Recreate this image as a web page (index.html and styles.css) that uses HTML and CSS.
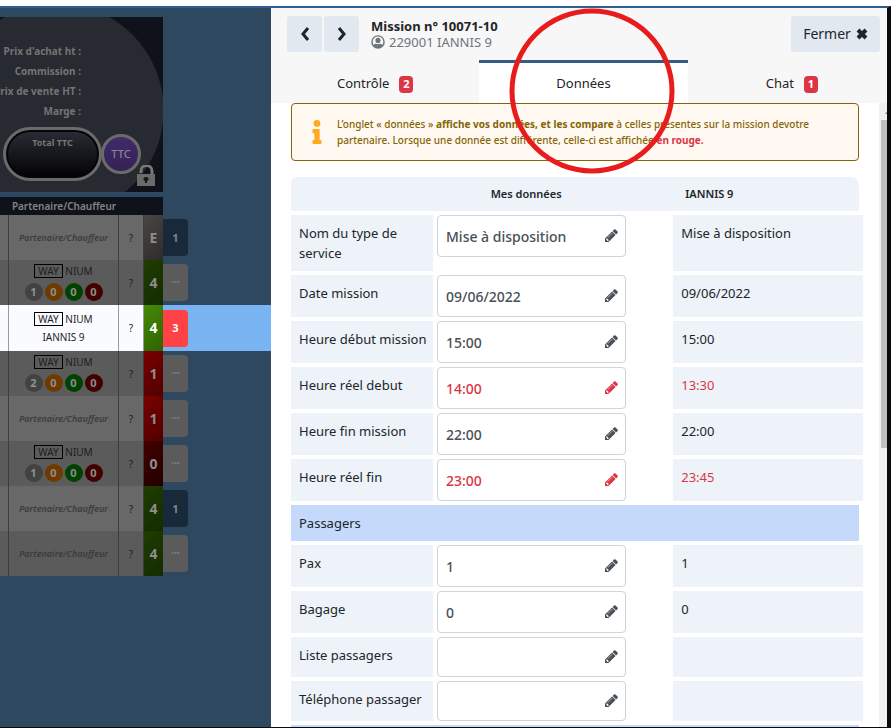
FILE: index.html
```html
<!DOCTYPE html>
<html lang="fr">
<head>
    <meta charset="UTF-8">
    <meta name="viewport" content="width=device-width, initial-scale=1.0">
    <title>Mission n° 10071-10</title>
    <link rel="stylesheet" href="styles.css">
</head>
<body>
    <!-- icônes -->
    <svg class="sprite">
        <symbol id="pencil" viewBox="128 128 1536 1536"><path d="M491 1536l91-91-235-235-91 91v107h128v128h107zm523-928q0-22-22-22-10 0-17 7l-542 542q-7 7-7 17 0 22 22 22 10 0 17-7l542-542q7-7 7-17zm-54-192l416 416-832 832h-416v-416zm683 96q0 53-37 90l-166 166-416-416 166-165q36-38 90-38 53 0 91 38l235 234q37 39 37 91z"/></symbol>
        <symbol id="user" viewBox="0 0 512 512"><path fill-rule="evenodd" d="M256 8a248 248 0 1 0 0 496 248 248 0 0 0 0-496zm0 50a198 198 0 0 1 160 314c-22-33-60-48-90-48-12 0-30 12-70 12s-58-12-70-12c-30 0-68 15-90 48A198 198 0 0 1 256 58zm0 46a94 94 0 1 0 0 188 94 94 0 0 0 0-188z"/></symbol>
        <symbol id="info" viewBox="0 0 192 512"><path d="M20 424h20V280H20c-11 0-20-9-20-20v-48c0-11 9-20 20-20h112c11 0 20 9 20 20v212h20c11 0 20 9 20 20v48c0 11-9 20-20 20H20c-11 0-20-9-20-20v-48c0-11 9-20 20-20zM96 0a72 72 0 1 0 0 144A72 72 0 0 0 96 0z"/></symbol>
    </svg>

    <div class="app">
        <aside class="planning">
            <div class="totals">
                <ul class="totals-list">
                    <li>Prix d'achat ht :</li>
                    <li>Commission :</li>
                    <li>Prix de vente HT :</li>
                    <li>Marge :</li>
                </ul>
                <div class="totals-foot">
                    <div class="total">Total TTC</div>
                    <button class="ttc" type="button">TTC</button>
                </div>
                <svg class="lock" viewBox="0 0 18 21"><path d="M4 8V6a5 5 0 0 1 11 0v4" fill="none" stroke="#787878" stroke-width="3"/><path d="M0 9h18v12H0z" fill="#6b6b6b"/><path d="M9 12a2 2 0 0 0-1 4v2h2v-2a2 2 0 0 0-1-4z" fill="#15171d"/></svg>
            </div>

            <table class="missions">
                <colgroup><col class="c-edge"><col class="c-partner"><col class="c-state"><col class="c-note"><col></colgroup>
                <thead>
                    <tr><th></th><th>Partenaire/Chauffeur</th><th></th><th></th><td></td></tr>
                </thead>
                <tbody>
                    <tr>
                        <td></td><td><em>Partenaire/Chauffeur</em></td><td>?</td><td class="note grey">E</td>
                        <td class="side"><button class="chip blue" type="button">1</button></td>
                    </tr>
                    <tr class="alt">
                        <td></td>
                        <td><span class="way">WAY</span> NIUM<div class="dots"><b class="d1">1</b><b class="d2">0</b><b class="d3">0</b><b class="d4">0</b></div></td>
                        <td>?</td><td class="note green">4</td>
                        <td class="side"><button class="chip more" type="button">•••</button></td>
                    </tr>
                    <tr class="active">
                        <td></td>
                        <td><span class="way">WAY</span> NIUM<div class="driver">IANNIS 9</div></td>
                        <td>?</td><td class="note green">4</td>
                        <td class="side"><button class="chip red" type="button">3</button></td>
                    </tr>
                    <tr class="alt">
                        <td></td>
                        <td><span class="way">WAY</span> NIUM<div class="dots"><b class="d1">2</b><b class="d2">0</b><b class="d3">0</b><b class="d4">0</b></div></td>
                        <td>?</td><td class="note red">1</td>
                        <td class="side"><button class="chip more" type="button">•••</button></td>
                    </tr>
                    <tr>
                        <td></td><td><em>Partenaire/Chauffeur</em></td><td>?</td><td class="note red">1</td>
                        <td class="side"><button class="chip more" type="button">•••</button></td>
                    </tr>
                    <tr class="alt">
                        <td></td>
                        <td><span class="way">WAY</span> NIUM<div class="dots"><b class="d1">1</b><b class="d2">0</b><b class="d3">0</b><b class="d4">0</b></div></td>
                        <td>?</td><td class="note dark">0</td>
                        <td class="side"><button class="chip more" type="button">•••</button></td>
                    </tr>
                    <tr>
                        <td></td><td><em>Partenaire/Chauffeur</em></td><td>?</td><td class="note green">4</td>
                        <td class="side"><button class="chip blue" type="button">1</button></td>
                    </tr>
                    <tr class="alt">
                        <td></td><td><em>Partenaire/Chauffeur</em></td><td>?</td><td class="note green">4</td>
                        <td class="side"><button class="chip more" type="button">•••</button></td>
                    </tr>
                </tbody>
            </table>
        </aside>

        <main class="panel">
            <header class="panel-head">
                <button class="btn" type="button" aria-label="Précédent"><svg width="12" height="16" viewBox="0 0 12 16"><path d="M9 2L4 8l5 6" /></svg></button>
                <button class="btn" type="button" aria-label="Suivant"><svg width="12" height="16" viewBox="0 0 12 16"><path d="M3 2l5 6-5 6" /></svg></button>
                <div class="mission">
                    <h1>Mission n° 10071-10</h1>
                    <p><svg width="14" height="14"><use href="#user"/></svg>229001 IANNIS 9</p>
                </div>
                <button class="btn close" type="button">Fermer <svg width="12" height="12" viewBox="0 0 12 12"><path d="M2 2l8 8M10 2l-8 8"/></svg></button>
            </header>

            <nav class="tabs">
                <a href="#controle">Contrôle <span class="badge">2</span></a>
                <a href="#donnees" class="current">Données</a>
                <a href="#chat">Chat <span class="badge">1</span></a>
            </nav>

            <div class="scroller">
                <div class="content">
                    <div class="alert">
                        <svg width="12" height="24"><use href="#info"/></svg>
                        <p>L’onglet « données » <b>affiche vos données, et les compare</b> à celles présentes sur la mission devotre<br>partenaire. Lorsque une donnée est différente, celle-ci est affichée <b class="diff">en rouge.</b></p>
                    </div>

                    <table class="compare">
                        <colgroup><col class="c-label"><col class="c-mine"><col></colgroup>
                        <thead>
                            <tr><th></th><th>Mes données</th><th>IANNIS 9</th></tr>
                        </thead>
                        <tbody>
                            <tr>
                                <th><label for="type">Nom du type de service</label></th>
                                <td><div class="field"><input id="type" value="Mise à disposition"><svg><use href="#pencil"/></svg></div></td>
                                <td>Mise à disposition</td>
                            </tr>
                            <tr>
                                <th><label for="date">Date mission</label></th>
                                <td><div class="field"><input id="date" value="09/06/2022"><svg><use href="#pencil"/></svg></div></td>
                                <td>09/06/2022</td>
                            </tr>
                            <tr>
                                <th><label for="debut">Heure début mission</label></th>
                                <td><div class="field"><input id="debut" value="15:00"><svg><use href="#pencil"/></svg></div></td>
                                <td>15:00</td>
                            </tr>
                            <tr class="diff">
                                <th><label for="debut-reel">Heure réel debut</label></th>
                                <td><div class="field"><input id="debut-reel" value="14:00"><svg><use href="#pencil"/></svg></div></td>
                                <td>13:30</td>
                            </tr>
                            <tr>
                                <th><label for="fin">Heure fin mission</label></th>
                                <td><div class="field"><input id="fin" value="22:00"><svg><use href="#pencil"/></svg></div></td>
                                <td>22:00</td>
                            </tr>
                            <tr class="diff">
                                <th><label for="fin-reel">Heure réel fin</label></th>
                                <td><div class="field"><input id="fin-reel" value="23:00"><svg><use href="#pencil"/></svg></div></td>
                                <td>23:45</td>
                            </tr>
                            <tr class="section"><th colspan="3">Passagers</th></tr>
                            <tr>
                                <th><label for="pax">Pax</label></th>
                                <td><div class="field"><input id="pax" value="1"><svg><use href="#pencil"/></svg></div></td>
                                <td>1</td>
                            </tr>
                            <tr>
                                <th><label for="bagage">Bagage</label></th>
                                <td><div class="field"><input id="bagage" value="0"><svg><use href="#pencil"/></svg></div></td>
                                <td>0</td>
                            </tr>
                            <tr class="short">
                                <th><label for="liste">Liste passagers</label></th>
                                <td><div class="field"><input id="liste"><svg><use href="#pencil"/></svg></div></td>
                                <td></td>
                            </tr>
                            <tr class="short">
                                <th><label for="tel">Téléphone passager</label></th>
                                <td><div class="field"><input id="tel"><svg><use href="#pencil"/></svg></div></td>
                                <td></td>
                            </tr>
                            <tr class="section"><th colspan="3"></th></tr>
                        </tbody>
                    </table>
                </div>
                <div class="scrollbar"><i class="arrow"></i><i class="thumb"></i></div>
            </div>

            <svg class="ring" viewBox="0 0 166 166"><circle cx="83" cy="83" r="80"/></svg>
        </main>
    </div>
</body>
</html>
```

FILE: styles.css
```css
* {
    box-sizing: border-box;
}

body {
    margin: 0;
    height: 100vh;
    padding-top: 6px;
    overflow: hidden;
    background: #fff;
    color: #212529;
    font: 13px/20px "Noto Sans", sans-serif;
}

button, input {
    font: inherit;
    color: inherit;
}

ul, h1, p {
    margin: 0;
    padding: 0;
}

.sprite {
    display: none;
}

.app {
    display: flex;
    height: 100%;
    border-top: 2px solid #2a6190;
    border-right: 4px solid #0b0b0b;
    border-bottom: 1px solid #0b0b0b;
}

/* planning à gauche */
.planning {
    flex: 0 0 271px;
    padding-top: 9px;
    background: #2e4860;
    overflow: hidden;
}

.totals {
    position: relative;
    width: 163px;
    height: 175px;
    padding-top: 24px;
    background: radial-gradient(circle at 57px 93px, #272a31 106px, #0f121a 107px);
    color: #747474;
    font-size: 10px;
    font-weight: bold;
}

.totals-list {
    width: 81px;
    list-style: none;
}

.totals-list li {
    display: flex;
    justify-content: flex-end;
    white-space: nowrap;
}

.totals-foot {
    display: flex;
    align-items: center;
    padding: 6px 0 0 3px;
}

.total {
    width: 99px;
    height: 54px;
    padding-top: 3px;
    border: 3px solid #6b6b6b;
    border-radius: 27px;
    background: linear-gradient(#2b2d35, #020204);
    box-shadow: inset 0 0 0 2px #050507;
    font-size: 9px;
    text-align: center;
}

.ttc {
    width: 40px;
    height: 40px;
    margin-left: -1px;
    padding: 0;
    border: 3px solid #6b6b6b;
    border-radius: 50%;
    background: linear-gradient(#412b69, #332255);
    color: #8a8494;
    font-size: 11px;
    font-weight: 500;
}

.lock {
    position: absolute;
    right: 8px;
    bottom: 6px;
    width: 18px;
    height: 21px;
}

.missions {
    width: 100%;
    margin-top: 5px;
    border-spacing: 0;
    table-layout: fixed;
    font-size: 10px;
    line-height: 14px;
    text-align: center;
    color: #1d1b26;
}

.c-edge {
    width: 9px;
}

.c-partner {
    width: 110px;
}

.c-state {
    width: 25px;
}

.c-note {
    width: 19px;
}

.missions th {
    height: 18px;
    padding: 0;
    background: #0f121a;
    color: #858585;
    font-weight: 600;
}

.missions tbody td {
    height: 45px;
    padding: 0;
    border-right: 1px solid #3d3d3d;
    background: #686868;
}

.missions .alt td {
    background: #5b5b5b;
}

.missions .active td {
    height: 46px;
    background: #fafbff;
    border-color: #9a9a9a;
}

.missions em {
    color: #3c3c3c;
    font-size: 9px;
    font-weight: 600;
}

.missions tbody .note {
    border: 0;
    color: #8d8d8d;
    font-size: 14px;
    font-weight: bold;
}

.missions .note.grey {
    background: linear-gradient(135deg, #494644, #2e2b2a);
}

.missions .note.green {
    background: linear-gradient(135deg, #1f3d00, #142b00);
}

.missions .note.red {
    background: linear-gradient(135deg, #7a0000, #500000);
}

.missions .note.dark {
    background: linear-gradient(135deg, #420000, #240000);
}

.missions .active .note {
    background: linear-gradient(135deg, #458a08, #2f6200);
    color: #fff;
}

.missions tbody .side {
    border: 0;
    background: none;
    text-align: left;
}

.missions .active .side {
    background: #78b4f2;
}

.chip {
    display: block;
    width: 25px;
    height: 37px;
    padding: 0;
    border: 0;
    border-radius: 0 4px 4px 0;
    background: #5b5b5b;
    color: #7a7a7a;
    font-size: 11px;
    font-weight: bold;
}

.chip.more {
    font-size: 7px;
}

.chip.blue {
    background: #18293a;
    color: #7d868e;
}

.chip.red {
    background: #ff4246;
    color: #fff;
}

.way {
    display: inline-block;
    padding: 0 3px;
    border: 1px solid #000;
    line-height: 12px;
}

.driver {
    margin-top: 4px;
}

.dots {
    display: flex;
    justify-content: center;
    gap: 2px;
    margin-top: 5px;
}

.dots b {
    width: 18px;
    height: 18px;
    border-radius: 50%;
    color: #8f8f8f;
    font-size: 11px;
    line-height: 17px;
}

.d1 {
    background: #424242;
}

.d2 {
    background: #6f3a00;
}

.d3 {
    background: #004300;
}

.d4 {
    background: #430000;
}

/* fiche mission */
.panel {
    position: relative;
    display: flex;
    flex: 1;
    flex-direction: column;
    min-width: 0;
    overflow: hidden;
    background: #f7f7f7;
}

.panel-head {
    display: flex;
    align-items: center;
    gap: 2px;
    padding: 8px 7px 8px 16px;
}

.btn {
    display: flex;
    align-items: center;
    justify-content: center;
    gap: 5px;
    width: 35px;
    height: 36px;
    padding: 0;
    border: 0;
    border-radius: 3px;
    background: #e2e8f0;
}

.btn path {
    fill: none;
    stroke: #212529;
    stroke-width: 3;
}

.close {
    width: 89px;
    margin-left: auto;
    font-size: 14px;
}

.close path {
    stroke-width: 4;
}

.mission {
    margin-left: 10px;
    line-height: 16px;
}

.mission h1 {
    font-size: 13px;
    line-height: 16px;
}

.mission p {
    display: flex;
    align-items: center;
    gap: 4px;
    color: #6c757d;
}

.mission svg {
    fill: #6c757d;
}

.tabs {
    display: flex;
    margin-right: -9px;
}

.tabs a {
    display: flex;
    flex: 1;
    align-items: center;
    justify-content: center;
    gap: 10px;
    height: 43px;
    border-top: 3px solid transparent;
    color: #212529;
    text-decoration: none;
}

.tabs .current {
    border-color: #335c87;
    background: #fff;
}

.badge {
    width: 14px;
    height: 17px;
    margin-top: 3px;
    border-radius: 4px;
    background: #dc3545;
    color: #fff;
    font-size: 11px;
    font-weight: bold;
    line-height: 16px;
    text-align: center;
}

.scroller {
    display: flex;
    flex: 1;
    min-height: 0;
    overflow: hidden;
    background: #fff;
}

.content {
    flex: 1;
    padding: 0 20px;
}

.alert {
    display: flex;
    align-items: center;
    gap: 14px;
    height: 58px;
    padding-left: 19px;
    border: 1px solid #856404;
    border-radius: 4px;
    background: #fff9f2;
    color: #856404;
    font-size: 10px;
    font-weight: 500;
    line-height: 16px;
    white-space: nowrap;
}

.alert svg {
    fill: #ffa91f;
}

.alert .diff {
    color: #dc3545;
}

.compare {
    width: calc(100% + 4px);
    margin-top: 12px;
    border-spacing: 0 4px;
    table-layout: fixed;
}

.c-label {
    width: 142px;
}

.c-mine {
    width: 42%;
}

.compare th,
.compare td {
    padding: 8px;
    background: #edf3f8;
    font-weight: normal;
    text-align: left;
    vertical-align: top;
}

.compare tbody th {
    padding-right: 4px;
}

.compare thead th {
    height: 34px;
    padding: 0;
    font-size: 11px;
    font-weight: 600;
    vertical-align: middle;
}

.compare thead th:first-child {
    border-top-left-radius: 6px;
}

.compare thead th:nth-child(2) {
    padding-right: 54px;
    text-align: center;
}

.compare thead th:last-child {
    padding-left: 12px;
    border-right: 4px solid transparent;
    border-top-right-radius: 10px;
    background-clip: padding-box;
}

.compare tbody td:nth-child(2) {
    padding: 0 47px 0 4px;
    background: none;
}

.compare .section th {
    height: 36px;
    border-right: 4px solid transparent;
    background: #c5dafb;
    background-clip: padding-box;
}

.field {
    position: relative;
}

.field input {
    display: block;
    width: 100%;
    height: 42px;
    padding: 0 32px 0 8px;
    border: 1px solid #ced4da;
    border-radius: 4px;
    background: #fff;
    color: #495057;
    font-size: 14px;
    font-weight: 500;
}

.short .field input {
    height: 40px;
}

.field svg {
    position: absolute;
    top: 50%;
    right: 8px;
    width: 13px;
    height: 13px;
    margin-top: -7px;
    fill: #495057;
}

.compare .diff td,
.compare .diff input {
    color: #dc3545;
}

.compare .diff svg {
    fill: #dc3545;
}

.scrollbar {
    width: 8px;
    padding-left: 2px;
    background: #f1f1f1;
}

.arrow {
    display: block;
    width: 6px;
    height: 17px;
    background: linear-gradient(135deg, transparent 50%, #a3a3a3 50%) 3px 8px / 3px 3px no-repeat;
}

.thumb {
    display: block;
    height: 328px;
    background: #c1c1c1;
}

/* repère sur l'onglet */
.ring {
    position: absolute;
    top: 0;
    left: 238px;
    width: 166px;
    height: 166px;
    fill: none;
    stroke: #e81c1c;
    stroke-width: 5;
    pointer-events: none;
}
```
